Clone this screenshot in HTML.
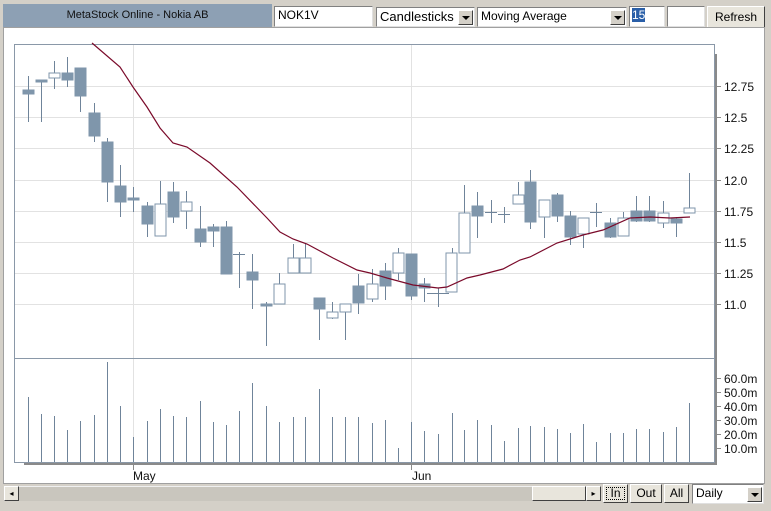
<!DOCTYPE html>
<html><head><meta charset="utf-8"><style>
body{margin:0;width:771px;height:511px;background:#d4d0c8;font-family:"Liberation Sans",sans-serif;position:relative;overflow:hidden}
.a{position:absolute;box-sizing:border-box}
.inp{background:#fff;border:1px solid #808080;border-right-color:#e0e0e0;border-bottom-color:#e0e0e0;font-size:12px;padding:1px 3px}
.dd{position:absolute;right:1px;top:2px;width:15px;height:15px;background:#d4d0c8;border:1px solid #fff;border-right-color:#404040;border-bottom-color:#404040;box-sizing:border-box}
.dd:after{content:"";position:absolute;left:3px;top:5px;border:4px solid transparent;border-top:4px solid #000;border-bottom:0}
.btn{background:#e8e5dc;border:1px solid #fff;border-right-color:#404040;border-bottom-color:#404040;font-size:12px;text-align:center}
</style></head><body>
<div class="a" style="left:3px;top:4px;width:269px;height:23px;background:#8da0b4;font-size:11px;color:#111;text-align:center;line-height:22px">MetaStock Online - Nokia AB</div>
<div class="a inp" style="left:274px;top:6px;width:99px;height:21px">NOK1V</div>
<div class="a inp" style="left:376px;top:7px;width:99px;height:20px;font-size:13px">Candlesticks<span class="dd"></span></div>
<div class="a inp" style="left:477px;top:7px;width:150px;height:20px">Moving Average<span class="dd"></span></div>
<div class="a inp" style="left:629px;top:6px;width:36px;height:21px;padding:1px 2px"><span style="background:#2a5fa8;color:#fff">15</span></div>
<div class="a inp" style="left:667px;top:6px;width:38px;height:21px"></div>
<div class="a btn" style="left:707px;top:6px;width:58px;height:22px;line-height:20px">Refresh</div>
<div class="a" style="left:3px;top:27px;width:762px;height:457px;background:#fff;border:1px solid #a0a0a0"></div>
<svg class="a" style="left:0;top:0" width="771" height="511">
<g stroke="#e2e2e2" stroke-width="1">
<line x1="15" x2="714" y1="86.5" y2="86.5"/><line x1="15" x2="714" y1="117.5" y2="117.5"/><line x1="15" x2="714" y1="148.5" y2="148.5"/><line x1="15" x2="714" y1="180.5" y2="180.5"/><line x1="15" x2="714" y1="211.5" y2="211.5"/><line x1="15" x2="714" y1="242.5" y2="242.5"/><line x1="15" x2="714" y1="273.5" y2="273.5"/><line x1="15" x2="714" y1="304.5" y2="304.5"/>
<line x1="133.5" x2="133.5" y1="44" y2="467"/><line x1="411.5" x2="411.5" y1="44" y2="467"/>
</g>
<rect x="714" y="54" width="3" height="410" fill="#8a8a8a"/>
<rect x="24" y="462" width="693" height="3" fill="#8a8a8a"/>
<rect x="14.5" y="44.5" width="700" height="418" fill="none" stroke="#8a98a8"/>
<line x1="14" x2="715" y1="358.5" y2="358.5" stroke="#8a98a8"/>
<g stroke="#8a8a8a"><line x1="133.5" x2="133.5" y1="465" y2="470"/><line x1="411.5" x2="411.5" y1="465" y2="470"/></g>
<g stroke="#6f849a" stroke-width="1">
<path d="M28.5 462V397M41.5 462V414M54.5 462V416M67.5 462V430M80.5 462V421M94.5 462V415M107.5 462V362M120.5 462V406M133.5 462V437M147.5 462V421M160.5 462V409M173.5 462V416M186.5 462V417M200.5 462V401M213.5 462V422M226.5 462V425M239.5 462V411M252.5 462V383M266.5 462V406M279.5 462V422M293.5 462V417M305.5 462V417M319.5 462V389M332.5 462V417M345.5 462V417M358.5 462V417M372.5 462V423M385.5 462V420M398.5 462V448M411.5 462V422M424.5 462V431M438.5 462V434M452.5 462V413M464.5 462V430M477.5 462V420M491.5 462V425M504.5 462V441M518.5 462V428M530.5 462V426M544.5 462V427M557.5 462V429M570.5 462V433M583.5 462V424M596.5 462V442M610.5 462V433M623.5 462V433M636.5 462V429M649.5 462V429M663.5 462V432M676.5 462V427M689.5 462V403"/>
<path d="M28.5 76V122M41.5 80V122M54.5 61V89M67.5 57V87M80.5 68V112M94.5 103V142M107.5 138V202M120.5 165V217M133.5 187V212M147.5 202V237M160.5 181V236M173.5 182V223M186.5 191V229M200.5 206V247M213.5 224V247M226.5 221V274M239.5 252V288M252.5 254V309M266.5 302V346M279.5 273V304M293.5 244V273M305.5 244V273M319.5 298V340M332.5 302V319M345.5 304V340M358.5 274V314M372.5 269V302M385.5 263V300M398.5 248V280M411.5 254V300M424.5 278V302M438.5 288V307M452.5 248V292M464.5 185V253M477.5 192V238M491.5 200V223M504.5 207V223M518.5 182V204M530.5 170V229M544.5 200V238M557.5 193V222M570.5 211V245M583.5 218V248M596.5 203V227M610.5 218V238M623.5 212V236M636.5 196V222M649.5 196V222M663.5 201V228M676.5 217V237M689.5 173V213"/>
<path d="M233 254.5H245M427 293.5H449M485 212.5H497M498 214.5H510M590 212.5H602"/>
</g>
<g fill="#7f96ab" stroke="#7f96ab">
<rect x="23" y="90" width="11" height="4"/><rect x="36" y="80" width="11" height="2"/><rect x="62" y="73" width="11" height="7"/><rect x="75" y="68" width="11" height="28"/><rect x="89" y="113" width="11" height="23"/><rect x="102" y="142" width="11" height="40"/><rect x="115" y="186" width="11" height="16"/><rect x="128" y="198" width="11" height="2"/><rect x="142" y="206" width="11" height="18"/><rect x="168" y="192" width="11" height="25"/><rect x="195" y="229" width="11" height="13"/><rect x="208" y="227" width="11" height="4"/><rect x="221" y="227" width="11" height="47"/><rect x="247" y="272" width="11" height="8"/><rect x="261" y="304" width="11" height="2"/><rect x="314" y="298" width="11" height="11"/><rect x="353" y="286" width="11" height="17"/><rect x="380" y="271" width="11" height="15"/><rect x="406" y="254" width="11" height="42"/><rect x="419" y="284" width="11" height="4"/><rect x="472" y="206" width="11" height="10"/><rect x="525" y="182" width="11" height="40"/><rect x="552" y="195" width="11" height="21"/><rect x="565" y="216" width="11" height="21"/><rect x="605" y="223" width="11" height="14"/><rect x="631" y="211" width="11" height="10"/><rect x="644" y="211" width="11" height="10"/><rect x="671" y="219" width="11" height="4"/>
</g>
<g fill="#fff" stroke="#7f96ab">
<rect x="49" y="73" width="11" height="5"/><rect x="155" y="204" width="11" height="32"/><rect x="181" y="202" width="11" height="9"/><rect x="274" y="284" width="11" height="20"/><rect x="288" y="258" width="11" height="15"/><rect x="300" y="258" width="11" height="15"/><rect x="327" y="312" width="11" height="6"/><rect x="340" y="304" width="11" height="8"/><rect x="367" y="284" width="11" height="15"/><rect x="393" y="253" width="11" height="20"/><rect x="446" y="253" width="11" height="39"/><rect x="459" y="213" width="11" height="40"/><rect x="513" y="195" width="11" height="9"/><rect x="539" y="200" width="11" height="17"/><rect x="578" y="218" width="11" height="16"/><rect x="618" y="218" width="11" height="18"/><rect x="658" y="213" width="11" height="10"/><rect x="684" y="208" width="11" height="5"/>
</g>
<polyline fill="none" stroke="#7a0a2a" stroke-width="1.2" points="92,43 120,67 133,87 147,107 160,128 173,143 187,147 210,163 237,187 267,218 280,232 293,239 307,244 333,258 357,270 370,273 387,278 413,285 438,288 447,287 467,278 480,275 503,269 520,260 530,257 557,243 583,235 603,230 630,218 650,217 670,218 690,217"/>
<g stroke="#8a8a8a"><path d="M717 86.5h4M717 117.5h4M717 148.5h4M717 180.5h4M717 211.5h4M717 242.5h4M717 273.5h4M717 304.5h4M717 378.5h4M717 392.5h4M717 406.5h4M717 420.5h4M717 434.5h4M717 448.5h4"/></g>
<g font-family="Liberation Sans,sans-serif" font-size="12" fill="#111">
<text x="724" y="91">12.75</text><text x="724" y="122">12.5</text><text x="724" y="153">12.25</text><text x="724" y="185">12.0</text><text x="724" y="216">11.75</text><text x="724" y="247">11.5</text><text x="724" y="278">11.25</text><text x="724" y="309">11.0</text>
<text x="724" y="383">60.0m</text><text x="724" y="397">50.0m</text><text x="724" y="411">40.0m</text><text x="724" y="425">30.0m</text><text x="724" y="439">20.0m</text><text x="724" y="453">10.0m</text>
<text x="133" y="480">May</text><text x="412" y="480">Jun</text>
</g>
</svg>
<div class="a" style="left:4px;top:486px;width:597px;height:15px;background:#c9c6be;border-top:1px solid #f0f0f0"></div>
<div class="a btn" style="left:4px;top:486px;width:15px;height:15px;font-size:8px;line-height:13px">◂</div>
<div class="a btn" style="left:532px;top:486px;width:54px;height:15px"></div>
<div class="a btn" style="left:586px;top:486px;width:15px;height:15px;font-size:8px;line-height:13px">▸</div>
<div class="a btn" style="left:603px;top:484px;width:25px;height:19px;line-height:17px;outline:1px dotted #000;outline-offset:-4px">In</div>
<div class="a btn" style="left:630px;top:484px;width:32px;height:19px;line-height:17px">Out</div>
<div class="a btn" style="left:664px;top:484px;width:25px;height:19px;line-height:17px">All</div>
<div class="a inp" style="left:692px;top:484px;width:72px;height:20px">Daily<span class="dd"></span></div>
</body></html>
